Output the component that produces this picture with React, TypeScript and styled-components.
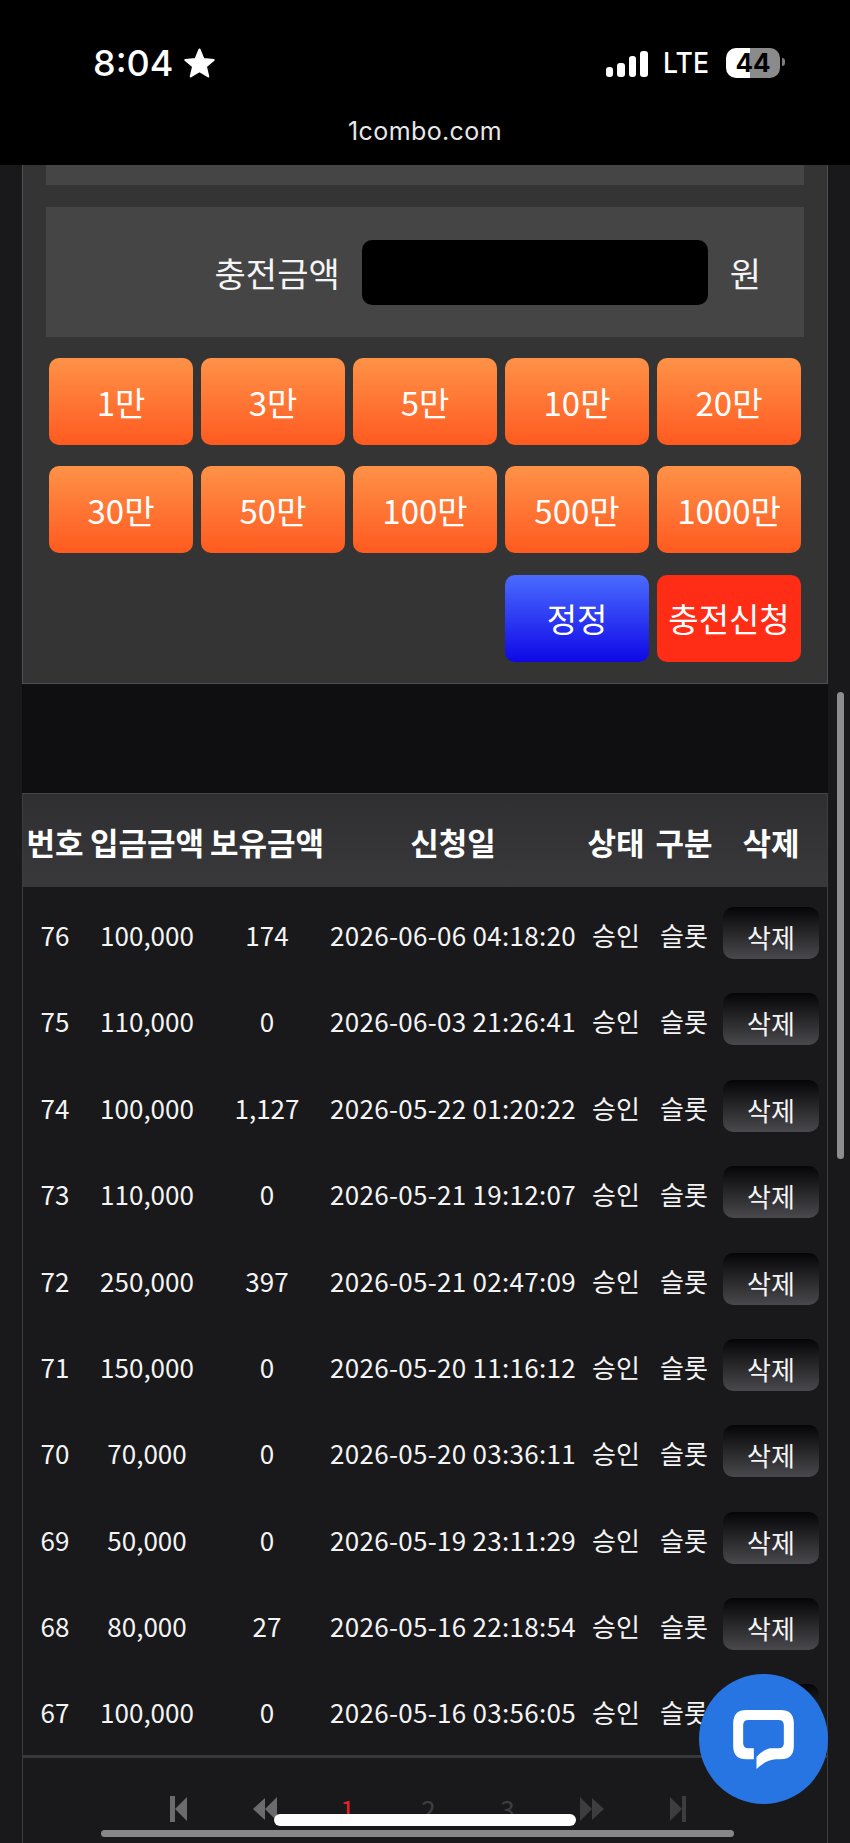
import styled, { createGlobalStyle } from "styled-components";

const AMOUNTS = ["1만", "3만", "5만", "10만", "20만", "30만", "50만", "100만", "500만", "1000만"];

const HEADS = ["번호", "입금금액", "보유금액", "신청일", "상태", "구분", "삭제"];

const ROWS = [
  { no: 76, amount: "100,000", held: "174", date: "2026-06-06 04:18:20" },
  { no: 75, amount: "110,000", held: "0", date: "2026-06-03 21:26:41" },
  { no: 74, amount: "100,000", held: "1,127", date: "2026-05-22 01:20:22" },
  { no: 73, amount: "110,000", held: "0", date: "2026-05-21 19:12:07" },
  { no: 72, amount: "250,000", held: "397", date: "2026-05-21 02:47:09" },
  { no: 71, amount: "150,000", held: "0", date: "2026-05-20 11:16:12" },
  { no: 70, amount: "70,000", held: "0", date: "2026-05-20 03:36:11" },
  { no: 69, amount: "50,000", held: "0", date: "2026-05-19 23:11:29" },
  { no: 68, amount: "80,000", held: "27", date: "2026-05-16 22:18:54" },
  { no: 67, amount: "100,000", held: "0", date: "2026-05-16 03:56:05" },
];

const SIGNAL = [10, 14, 21, 26];

const App = () => {
  return (
    <Page>
      <GlobalStyle />
      <TopBar>
        <StatusRow>
          <Clock>
            8:04
            <svg width="33" height="32" viewBox="0 0 33 32">
              <path
                d="M16.5 2.5l4 9.6 10.2.8-7.8 6.6 2.4 10-8.8-5.4-8.8 5.4 2.4-10-7.8-6.6 10.2-.8z"
                fill="#fff"
                stroke="#fff"
                strokeWidth="2"
                strokeLinejoin="round"
              />
            </svg>
          </Clock>
          <Indicators>
            <SignalBars>
              {SIGNAL.map((h) => (
                <SignalBar key={h} $height={h} />
              ))}
            </SignalBars>
            <Network>LTE</Network>
            <Battery>44</Battery>
          </Indicators>
        </StatusRow>
        <Address>1combo.com</Address>
      </TopBar>

      <Content>
        <ChargePanel>
          <FormStub />
          <AmountRow>
            <AmountLabel>충전금액</AmountLabel>
            <AmountInput />
            <Unit>원</Unit>
          </AmountRow>
          <ButtonGrid>
            {AMOUNTS.map((a) => (
              <ChargeButton key={a} $tone="orange">
                {a}
              </ChargeButton>
            ))}
            <ChargeButton $tone="blue" $start={4}>
              정정
            </ChargeButton>
            <ChargeButton $tone="red">충전신청</ChargeButton>
          </ButtonGrid>
        </ChargePanel>

        <Spacer />

        <History>
          <HeadRow>
            {HEADS.map((h) => (
              <span key={h}>{h}</span>
            ))}
          </HeadRow>
          <Body>
            {ROWS.map((r) => (
              <Row key={r.no}>
                <span>{r.no}</span>
                <span>{r.amount}</span>
                <span>{r.held}</span>
                <DateCell>{r.date}</DateCell>
                <span>승인</span>
                <span>슬롯</span>
                <DeleteButton>삭제</DeleteButton>
              </Row>
            ))}
          </Body>
          <Pager>
            <PageSlot $width={84}>
              <svg width="18" height="26" viewBox="0 0 18 26" fill="#6b6b6d">
                <rect x="0" y="0" width="5" height="26" />
                <path d="M17 1v24L5 13z" />
              </svg>
            </PageSlot>
            <PageSlot $width={87}>
              <svg width="26" height="26" viewBox="0 0 26 26" fill="#6b6b6d">
                <path d="M13 2v22L1 13zM25 1v24L13 13z" />
              </svg>
            </PageSlot>
            <PageSlot $width={79} $active>
              1
            </PageSlot>
            <PageSlot $width={83}>2</PageSlot>
            <PageSlot $width={75}>3</PageSlot>
            <PageSlot $width={93}>
              <svg width="26" height="26" viewBox="0 0 26 26" fill="#3d3d3f">
                <path d="M1 1v24L13 13zM13 2v22L25 13z" />
              </svg>
            </PageSlot>
            <PageSlot $width={79}>
              <svg width="16" height="26" viewBox="0 0 16 26" fill="#3d3d3f">
                <path d="M0 1v24L12 13z" />
                <rect x="12" y="0" width="4" height="26" />
              </svg>
            </PageSlot>
          </Pager>
        </History>
      </Content>

      <VerticalThumb />
      <HorizontalThumb />
      <HomeIndicator />
      <ChatBubble>
        <svg width="61" height="59" viewBox="0 0 182 177">
          <path
            d="M62 148H40Q0 148 0 108V40Q0 0 40 0H142Q182 0 182 40V108Q182 148 142 148H128Q98 150 70 177V140Q85 122 110 115H136Q152 115 152 100V46Q152 30 136 30H46Q30 30 30 46V100Q30 115 46 115H62Z"
            fill="#fff"
          />
        </svg>
      </ChatBubble>
    </Page>
  );
};

export default App;

const GlobalStyle = createGlobalStyle`
  html, body {
    margin: 0;
    padding: 0;
    background: #19191b;
  }
  * {
    box-sizing: border-box;
  }
`;

const Page = styled.div`
  position: relative;
  width: 850px;
  height: 1843px;
  overflow: hidden;
  background: #19191b;
  color: #f4f4f4;
  font-family: "Noto Sans CJK KR", "Noto Sans", sans-serif;
`;

const TopBar = styled.header`
  height: 165px;
  background: #000;
  padding: 47px 70px 0 93px;
  color: #fff;
  font-family: Inter, "Liberation Sans", sans-serif;
`;

const StatusRow = styled.div`
  display: flex;
  align-items: center;
  justify-content: space-between;
  height: 32px;
`;

const Clock = styled.div`
  display: flex;
  align-items: center;
  gap: 10px;
  font-size: 36px;
  font-weight: 500;
  line-height: 32px;
`;

const Indicators = styled.div`
  display: flex;
  align-items: center;
`;

const SignalBars = styled.div`
  display: flex;
  align-items: flex-end;
  gap: 4px;
  height: 26px;
  margin-top: 1px;
`;

const SignalBar = styled.i<{ $height: number }>`
  display: block;
  width: 7.5px;
  height: ${(p) => p.$height}px;
  border-radius: 3px;
  background: #fff;
`;

const Network = styled.span`
  margin-left: 15.4px;
  width: 63px;
  font-size: 28px;
  font-weight: 500;
  line-height: 32px;
  transform: scaleX(0.95);
  transform-origin: left center;
`;

const Battery = styled.div`
  position: relative;
  width: 54px;
  height: 30px;
  border-radius: 10px;
  background: linear-gradient(90deg, #fff 24px, #8b8b8b 24px);
  color: #000;
  font-size: 26px;
  font-weight: 700;
  line-height: 30px;
  text-align: center;
  &::after {
    content: "";
    position: absolute;
    left: 56px;
    top: 10px;
    width: 3px;
    height: 8px;
    border-radius: 0 3px 3px 0;
    background: #7d7d7d;
  }
`;

const Address = styled.div`
  margin-top: 37px;
  margin-left: -23px;
  font-size: 25px;
  letter-spacing: 0.4px;
  line-height: 30px;
  text-align: center;
  color: #e8e8e8;
`;

const Content = styled.main`
  width: 806px;
  margin-left: 22px;
`;

const ChargePanel = styled.section`
  background: #343434;
  border: 1px solid #4f4f4f;
  border-top: 0;
  padding: 0 23px 21px 23px;
`;

const FormStub = styled.div`
  height: 20px;
  background: #454545;
`;

const AmountRow = styled.div`
  display: flex;
  align-items: center;
  justify-content: flex-end;
  height: 130px;
  margin-top: 22px;
  padding-right: 43px;
  background: #454545;
`;

const AmountLabel = styled.label`
  font-size: 34px;
`;

const AmountInput = styled.div`
  width: 346px;
  height: 65px;
  margin: 0 22px;
  border-radius: 10px;
  background: #000;
`;

const Unit = styled.span`
  font-size: 34px;
`;

const TONES = {
  orange: "linear-gradient(180deg, #ff9248, #ff5a20)",
  blue: "linear-gradient(180deg, #4a6cff, #0f08e6)",
  red: "#ff2d16",
};

const ButtonGrid = styled.div`
  display: grid;
  grid-template-columns: repeat(5, 144px);
  grid-auto-rows: 87px;
  column-gap: 8px;
  row-gap: 21.4px;
  margin: 21px 3px 0;
`;

const ChargeButton = styled.button<{ $tone: keyof typeof TONES; $start?: number }>`
  ${(p) => (p.$start ? `grid-column-start: ${p.$start};` : "")}
  border: 0;
  padding: 0;
  border-radius: 10px;
  background: ${(p) => TONES[p.$tone]};
  color: #fff;
  font-family: inherit;
  font-size: 33px;
  white-space: nowrap;
`;

const Spacer = styled.div`
  height: 109px;
  background: #0f0f11;
`;

const History = styled.section`
  border-left: 1px solid #3d3d3f;
  border-right: 1px solid #3d3d3f;
  height: 1050px;
`;

const COLUMNS = "64px 120px 120px 252px 74px 62px 112px";

const HeadRow = styled.div`
  display: grid;
  grid-template-columns: ${COLUMNS};
  align-items: center;
  height: 94px;
  padding-top: 2px;
  border-top: 1px solid #454547;
  background: linear-gradient(180deg, #2f2f31, #39393b);
  font-size: 31px;
  font-weight: 700;
  text-align: center;
  white-space: nowrap;
  color: #fff;
`;

const Body = styled.div`
  padding-top: 7px;
  background: #19191b;
`;

const Row = styled.div`
  display: grid;
  grid-template-columns: ${COLUMNS};
  align-items: center;
  height: 86.4px;
  padding-bottom: 5px;
  font-size: 26px;
  text-align: center;
  white-space: nowrap;
`;

const DateCell = styled.span`
  letter-spacing: 0.3px;
`;

const DeleteButton = styled.button`
  justify-self: center;
  width: 96px;
  height: 52px;
  margin-bottom: 3px;
  border: 0;
  padding: 7px 0 0;
  border-radius: 10px;
  background: linear-gradient(180deg, #050507, #49494d);
  color: #f4f4f4;
  font-family: inherit;
  font-size: 26px;
`;

const Pager = styled.nav`
  display: flex;
  align-items: center;
  height: 100px;
  margin-top: -3px;
  padding: 0 0 0 114px;
  border-top: 3px solid #38383a;
`;

const PageSlot = styled.span<{ $width: number; $active?: boolean }>`
  display: flex;
  align-items: center;
  justify-content: center;
  width: ${(p) => p.$width}px;
  height: 26px;
  margin-top: 5px;
  font-size: 26px;
  color: ${(p) => (p.$active ? "#e3232b" : "#3f3f41")};
`;

const VerticalThumb = styled.div`
  position: absolute;
  left: 837px;
  top: 692px;
  width: 7px;
  height: 467px;
  border-radius: 4px;
  background: #8d8d8f;
`;

const HorizontalThumb = styled.div`
  position: absolute;
  left: 101px;
  top: 1830px;
  width: 633px;
  height: 7px;
  border-radius: 4px;
  background: #87878a;
`;

const HomeIndicator = styled.div`
  position: absolute;
  left: 274px;
  top: 1814px;
  width: 302px;
  height: 12px;
  border-radius: 6px;
  background: #fff;
`;

const ChatBubble = styled.div`
  position: absolute;
  left: 699px;
  top: 1674px;
  display: flex;
  align-items: center;
  justify-content: center;
  width: 129px;
  height: 130px;
  border-radius: 50%;
  background: #2675e3;
`;
